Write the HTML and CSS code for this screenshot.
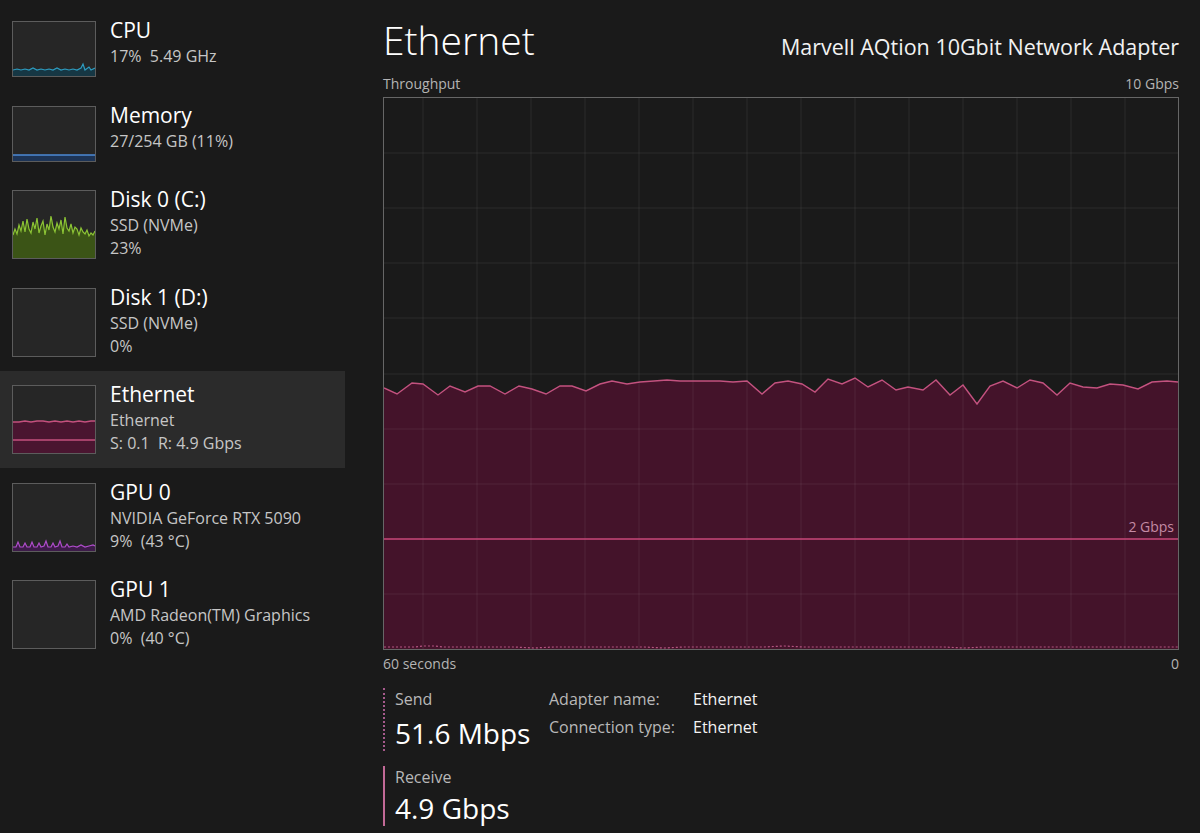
FILE: index.html
```html
<!DOCTYPE html>
<html lang="en">
<head>
  <meta charset="UTF-8" />
  <meta name="viewport" content="width=device-width, initial-scale=1.0"/>
  <title>Task Manager - Performance</title>
  <link rel="stylesheet" href="styles.css">
</head>
<body>
  <div class="sidebar">
    <div class="perf-row">
      <svg class="thumb" viewBox="0 0 82 54" preserveAspectRatio="none">
        <polygon class="cpu-fill" points="0,48 4,47 8,48 12,47 16,48 20,46 24,48 28,47 32,48 36,47 40,48 44,46 48,48 52,47 56,48 60,47 64,48 68,46 70,42 72,48 76,45 78,48 82,46 82,54 0,54"/>
        <polyline class="cpu-line" points="0,48 4,47 8,48 12,47 16,48 20,46 24,48 28,47 32,48 36,47 40,48 44,46 48,48 52,47 56,48 60,47 64,48 68,46 70,42 72,48 76,45 78,48 82,46"/>
      </svg>
      <div class="perf-text">
        <div class="perf-title">CPU</div>
        <div class="perf-sub">17%&nbsp; 5.49 GHz</div>
      </div>
    </div>

    <div class="perf-row">
      <svg class="thumb" viewBox="0 0 82 54" preserveAspectRatio="none">
        <rect class="mem-fill" x="0" y="48" width="82" height="6"/>
        <line class="mem-line" x1="0" y1="48" x2="82" y2="48"/>
      </svg>
      <div class="perf-text">
        <div class="perf-title">Memory</div>
        <div class="perf-sub">27/254 GB (11%)</div>
      </div>
    </div>

    <div class="perf-row">
      <svg class="thumb tall" viewBox="0 0 82 67" preserveAspectRatio="none">
        <polygon class="disk-fill" points="0,44 2,38 4,43 6,34 8,40 10,30 12,41 14,28 16,38 18,42 20,31 22,38 24,27 26,42 28,35 30,30 32,44 34,33 36,39 38,25 40,36 42,41 44,32 46,38 48,29 50,43 52,26 54,37 56,40 58,33 60,42 62,36 64,38 66,44 68,37 70,41 72,43 74,39 76,45 78,42 80,44 82,40 82,67 0,67"/>
        <polyline class="disk-line" points="0,44 2,38 4,43 6,34 8,40 10,30 12,41 14,28 16,38 18,42 20,31 22,38 24,27 26,42 28,35 30,30 32,44 34,33 36,39 38,25 40,36 42,41 44,32 46,38 48,29 50,43 52,26 54,37 56,40 58,33 60,42 62,36 64,38 66,44 68,37 70,41 72,43 74,39 76,45 78,42 80,44 82,40"/>
      </svg>
      <div class="perf-text">
        <div class="perf-title">Disk 0 (C:)</div>
        <div class="perf-sub">SSD (NVMe)</div>
        <div class="perf-sub">23%</div>
      </div>
    </div>

    <div class="perf-row">
      <svg class="thumb tall" viewBox="0 0 82 67" preserveAspectRatio="none"></svg>
      <div class="perf-text">
        <div class="perf-title">Disk 1 (D:)</div>
        <div class="perf-sub">SSD (NVMe)</div>
        <div class="perf-sub">0%</div>
      </div>
    </div>

    <div class="perf-row selected">
      <svg class="thumb tall" viewBox="0 0 82 67" preserveAspectRatio="none">
        <polygon class="eth-fill" points="0,36 6,36 12,35 18,36 24,35 30,35 36,36 42,35 48,36 54,35 60,36 66,35 72,36 78,35 82,35 82,67 0,67"/>
        <polyline class="eth-line" points="0,36 6,36 12,35 18,36 24,35 30,35 36,36 42,35 48,36 54,35 60,36 66,35 72,36 78,35 82,35"/>
        <line class="eth-line" x1="0" y1="54" x2="82" y2="54"/>
      </svg>
      <div class="perf-text">
        <div class="perf-title">Ethernet</div>
        <div class="perf-sub">Ethernet</div>
        <div class="perf-sub">S: 0.1&nbsp; R: 4.9 Gbps</div>
      </div>
    </div>

    <div class="perf-row">
      <svg class="thumb tall" viewBox="0 0 82 67" preserveAspectRatio="none">
        <polygon class="gpu-fill" points="0,63 3,63 5,58 7,63 10,63 12,59 14,63 17,63 19,58 21,63 24,63 26,59 28,63 31,62 33,57 35,63 38,63 40,59 42,63 45,62 47,57 49,63 52,63 54,60 56,63 60,62 64,63 68,61 72,63 76,62 80,61 82,62 82,67 0,67"/>
        <polyline class="gpu-line" points="0,63 3,63 5,58 7,63 10,63 12,59 14,63 17,63 19,58 21,63 24,63 26,59 28,63 31,62 33,57 35,63 38,63 40,59 42,63 45,62 47,57 49,63 52,63 54,60 56,63 60,62 64,63 68,61 72,63 76,62 80,61 82,62"/>
      </svg>
      <div class="perf-text">
        <div class="perf-title">GPU 0</div>
        <div class="perf-sub">NVIDIA GeForce RTX 5090</div>
        <div class="perf-sub">9%&nbsp; (43 °C)</div>
      </div>
    </div>

    <div class="perf-row">
      <svg class="thumb tall" viewBox="0 0 82 67" preserveAspectRatio="none"></svg>
      <div class="perf-text">
        <div class="perf-title">GPU 1</div>
        <div class="perf-sub">AMD Radeon(TM) Graphics</div>
        <div class="perf-sub">0%&nbsp; (40 °C)</div>
      </div>
    </div>
  </div>

  <div class="main">
    <div class="header">
      <h1>Ethernet</h1>
      <div class="adapter">Marvell AQtion 10Gbit Network Adapter</div>
    </div>

    <div class="axis-row axis-top">
      <span>Throughput</span>
      <span>10 Gbps</span>
    </div>

    <div class="graph">
      <svg width="794" height="551" viewBox="0 0 794 551">
        <!-- receive area -->
        <polygon class="area" points="0,290 13,296 28,285 39,286 54,297 66,288 81,294 94,288 106,288 121,296 135,288 148,291 162,296 176,288 188,288 202,293 216,286 228,283 243,286 256,284 270,283 283,282 296,283 310,283 323,283 336,283 349,284 363,283 378,296 391,285 404,283 418,286 431,294 444,281 458,286 471,280 484,289 498,282 512,292 524,289 539,292 552,282 566,297 579,287 593,306 606,288 619,283 633,290 646,282 659,285 673,297 686,285 699,289 713,290 726,286 739,287 754,291 768,284 783,283 794,284 794,551 0,551"/>

        <!-- grid -->
        <g class="grid">
          <line x1="0" y1="55" x2="794" y2="55"/>
          <line x1="0" y1="110" x2="794" y2="110"/>
          <line x1="0" y1="165" x2="794" y2="165"/>
          <line x1="0" y1="220" x2="794" y2="220"/>
          <line x1="0" y1="276" x2="794" y2="276"/>
          <line x1="0" y1="331" x2="794" y2="331"/>
          <line x1="0" y1="386" x2="794" y2="386"/>
          <line x1="0" y1="496" x2="794" y2="496"/>
          <line x1="39" y1="0" x2="39" y2="551"/>
          <line x1="93" y1="0" x2="93" y2="551"/>
          <line x1="147" y1="0" x2="147" y2="551"/>
          <line x1="201" y1="0" x2="201" y2="551"/>
          <line x1="255" y1="0" x2="255" y2="551"/>
          <line x1="309" y1="0" x2="309" y2="551"/>
          <line x1="363" y1="0" x2="363" y2="551"/>
          <line x1="417" y1="0" x2="417" y2="551"/>
          <line x1="471" y1="0" x2="471" y2="551"/>
          <line x1="525" y1="0" x2="525" y2="551"/>
          <line x1="579" y1="0" x2="579" y2="551"/>
          <line x1="633" y1="0" x2="633" y2="551"/>
          <line x1="687" y1="0" x2="687" y2="551"/>
          <line x1="741" y1="0" x2="741" y2="551"/>
        </g>

        <polyline class="recv-line" points="0,290 13,296 28,285 39,286 54,297 66,288 81,294 94,288 106,288 121,296 135,288 148,291 162,296 176,288 188,288 202,293 216,286 228,283 243,286 256,284 270,283 283,282 296,283 310,283 323,283 336,283 349,284 363,283 378,296 391,285 404,283 418,286 431,294 444,281 458,286 471,280 484,289 498,282 512,292 524,289 539,292 552,282 566,297 579,287 593,306 606,288 619,283 633,290 646,282 659,285 673,297 686,285 699,289 713,290 726,286 739,287 754,291 768,284 783,283 794,284"/>

        <!-- 2 Gbps scale marker -->
        <line class="marker" x1="0" y1="441" x2="794" y2="441"/>
        <text class="marker-label" x="790" y="434" text-anchor="end">2 Gbps</text>

        <!-- send -->
        <polyline class="send-line" points="0,549 30,549 40,548 50,548 60,549 130,549 150,550 170,549 260,549 280,550 300,549 380,549 400,548 420,549 560,549 580,550 600,549 794,549"/>
      </svg>
    </div>

    <div class="axis-row axis-bottom">
      <span>60 seconds</span>
      <span>0</span>
    </div>

    <div class="stats">
      <div class="rates">
        <div class="rate send">
          <div class="rate-label">Send</div>
          <div class="rate-value">51.6 Mbps</div>
        </div>
        <div class="rate receive">
          <div class="rate-label">Receive</div>
          <div class="rate-value">4.9 Gbps</div>
        </div>
      </div>
      <div class="details">
        <span class="detail-label">Adapter name:</span>
        <span class="detail-value">Ethernet</span>
        <span class="detail-label">Connection type:</span>
        <span class="detail-value">Ethernet</span>
      </div>
    </div>
  </div>
</body>
</html>
```

FILE: styles.css
```css
body {
  margin: 0;
  background-color: #1a1a1a;
  color: #fff;
  font-family: "Segoe UI", "Open Sans", sans-serif;
  display: flex;
  height: 833px;
  overflow: hidden;
}

/* left list */
.sidebar {
  width: 345px;
  padding-top: 6.5px;
  flex-shrink: 0;
}
.perf-row {
  display: flex;
  gap: 14px;
  padding: 14.5px 0 14px 12px;
}
.perf-row.selected {
  background: #2b2b2b;
}
.thumb {
  display: block;
  width: 82px;
  height: 54px;
  border: 1px solid #5c5c5c;
  background: #262626;
  flex-shrink: 0;
}
.thumb.tall {
  height: 67px;
}
.perf-text {
  margin: -5px 0 -8px;
}
.perf-title {
  font-size: 21px;
  line-height: 28px;
  color: #fff;
}
.perf-sub {
  font-size: 16px;
  line-height: 23px;
  color: #c6c6c6;
}
.perf-title + .perf-sub {
  margin-top: 1px;
}

.cpu-fill { fill: #163744; }
.cpu-line { fill: none; stroke: #2e9cc0; stroke-width: 1.2; }
.mem-fill { fill: #1d3456; }
.mem-line { stroke: #4d8ad6; stroke-width: 1.5; }
.disk-fill { fill: #3b5416; }
.disk-line { fill: none; stroke: #8cc435; stroke-width: 1.2; }
.eth-fill { fill: #4a1530; }
.eth-line { fill: none; stroke: #c4507e; stroke-width: 1.3; }
.gpu-fill { fill: #3d1b49; }
.gpu-line { fill: none; stroke: #b04dcc; stroke-width: 1.2; }

/* detail pane */
.main {
  margin-left: 38px;
  width: 796px;
  padding-top: 16px;
}
.header {
  display: flex;
  justify-content: space-between;
  align-items: baseline;
}
.header h1 {
  margin: 0;
  font-size: 39px;
  font-weight: 300;
  line-height: 48px;
}
.adapter {
  font-size: 21.5px;
  color: #f2f2f2;
}
.axis-row {
  display: flex;
  justify-content: space-between;
  font-size: 14px;
  line-height: 20px;
  color: #b4b4b4;
}
.axis-top {
  margin: 10px 0 3px;
}
.axis-bottom {
  margin-top: 4px;
}

.graph {
  border: 1px solid #666;
  height: 551px;
}
.graph svg {
  display: block;
}
.area { fill: #44132a; }
.grid line { stroke: rgba(255, 255, 255, 0.075); stroke-width: 1; }
.recv-line { fill: none; stroke: #c3527f; stroke-width: 1.4; }
.marker { stroke: #c9487a; stroke-width: 1.5; }
.marker-label {
  fill: #c48ba5;
  font-size: 14px;
  font-family: "Segoe UI", "Open Sans", sans-serif;
}
.send-line { fill: none; stroke: #b45480; stroke-width: 1.2; stroke-dasharray: 2 2; }

/* send / receive and adapter info */
.stats {
  display: flex;
  margin-top: 14px;
}
.rates {
  width: 166px;
}
.rate {
  padding-left: 10px;
}
.rate.send {
  border-left: 2px dotted #a65a8c;
}
.rate.receive {
  border-left: 2px solid #c26a97;
  margin-top: 15px;
}
.rate-label {
  font-size: 16px;
  line-height: 22px;
  color: #b8b8b8;
}
.rate-value {
  font-size: 28px;
  line-height: 36px;
  margin-top: 5px;
}
.receive .rate-value {
  margin-top: 2px;
}
.details {
  display: grid;
  grid-template-columns: 144px auto;
  row-gap: 6px;
  align-content: start;
  font-size: 16px;
  line-height: 22px;
}
.detail-label {
  color: #b8b8b8;
}
.detail-value {
  color: #f2f2f2;
}
```
